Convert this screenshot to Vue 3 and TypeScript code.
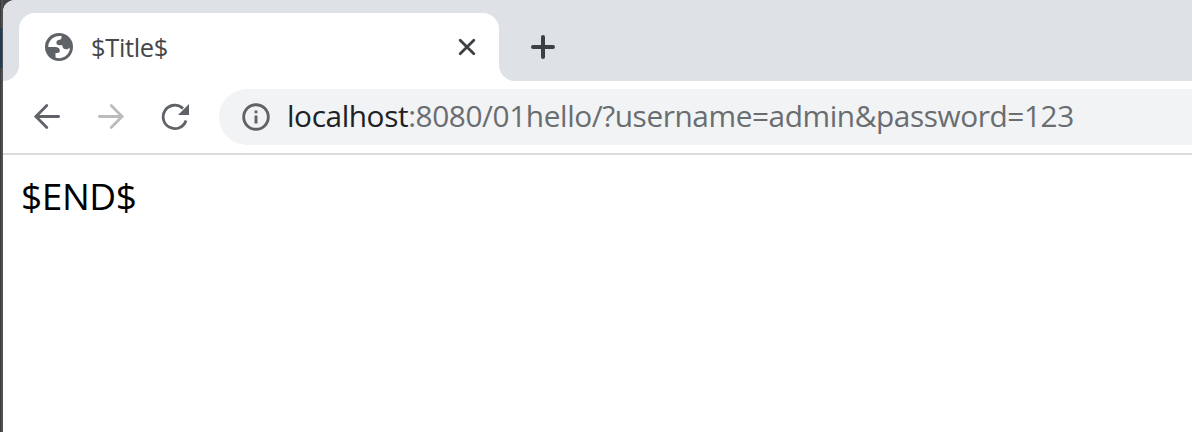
<script setup lang="ts">
const tabTitle: string = '$Title$'
const host: string = 'localhost'
const path: string = ':8080/01hello/?username=admin&password=123'
const content: string = '$END$'
</script>

<template>
  <div class="desktop">
    <div class="edge"><i class="edge-accent"></i></div>
    <main class="window">
      <header class="strip">
        <div class="gutter"></div>
        <div class="tab">
          <svg class="globe" viewBox="0 0 28 28">
            <circle cx="14" cy="14" r="14" fill="#5f6368" />
            <path d="M16.600 3.200C9.500 2.200 3.300 7 3.200 14H10C13.300 14 14.800 15.300 14.800 17.700C14.800 19.500 13.800 20.100 10.500 20.100V24.600C17.500 27 25 21.800 24.900 14.500C24 15.800 22.600 16.400 21 16.300C18.700 16.100 17.500 14.900 17.300 12.200H14.500C12.300 12.200 11.200 11.200 11.400 9.300C11.600 7.600 12.700 7 14.500 6.800C16 6.600 16.700 5.600 16.600 3.200Z" fill="#fff" />
          </svg>
          <span class="tab-title">{{ tabTitle }}</span>
          <svg class="close" viewBox="0 0 18 18"><path d="M2.200 2.200 15.800 15.800M15.800 2.200 2.200 15.800" /></svg>
        </div>
        <div class="rest">
          <svg class="plus" viewBox="0 0 24 24"><path d="M12 2V22M2 12H22" /></svg>
        </div>
      </header>
      <nav class="toolbar">
        <svg class="nav-icon back" viewBox="0 0 28 28"><path d="M25.600 13.500H3M13.800 2.600 2.900 13.500 13.800 24.400" /></svg>
        <svg class="nav-icon forward" viewBox="0 0 28 28"><path d="M2.400 13.500H25M14.200 2.600 25.100 13.500 14.200 24.400" /></svg>
        <svg class="reload" viewBox="0 0 28 28">
          <path d="M25 17.500A11.700 11.700 0 1 1 22 5.500" />
          <path class="head" d="M28 1V12H17Z" />
        </svg>
        <div class="omnibox">
          <svg class="info" viewBox="0 0 28 28">
            <circle cx="14" cy="14" r="12.300" />
            <path d="M14 12.500V20.500M14 7.500V10.300" />
          </svg>
          <div class="url"><span class="host">{{ host }}</span><span>{{ path }}</span></div>
        </div>
      </nav>
      <section class="page">{{ content }}</section>
    </main>
  </div>
</template>

<style>
body {
  background: #fff;
  overflow: hidden;
}
</style>

<style scoped>
.desktop {
  display: flex;
  width: 1192px;
  height: 432px;
  overflow: hidden;
  background: #454648;
  font-family: "Open Sans", "Noto Sans", sans-serif;
}
.edge {
  width: 3px;
  flex: none;
  padding-top: 28px;
  box-sizing: border-box;
  background: linear-gradient(90deg, #3b3c3e 0 1px, #505153 1px 3px);
}
.edge-accent {
  display: block;
  width: 2px;
  height: 40px;
  background: #203d56;
}
.window {
  flex: 1;
  min-width: 0;
  background: #fff;
  border-top-left-radius: 12px;
  overflow: hidden;
}
.strip {
  display: flex;
  height: 81px;
}
.gutter {
  width: 16px;
  background: #dee1e6;
  border-bottom-right-radius: 16px;
}
.tab {
  display: flex;
  align-items: center;
  width: 480px;
  box-sizing: border-box;
  padding: 0 23px 0 26px;
  border-top: 13px solid #dee1e6;
  position: relative;
  background: linear-gradient(#dee1e6, #dee1e6) 0 0 / 100% 16px no-repeat, #fff;
}
.tab::before {
  content: "";
  position: absolute;
  inset: 0;
  background: #fff;
  border-radius: 16px 16px 0 0;
}
.tab > * {
  position: relative;
}
.globe {
  width: 28px;
  height: 28px;
}
.tab-title {
  margin-left: 18px;
  font-size: 25.500px;
  line-height: 34px;
  letter-spacing: -0.35px;
  color: #45474a;
}
.close {
  width: 18px;
  height: 18px;
  margin-left: auto;
  fill: none;
  stroke: #3c4043;
  stroke-width: 2.8;
  stroke-linecap: round;
}
.rest {
  flex: 1;
  display: flex;
  padding: 35px 0 0 32px;
  background: #dee1e6;
  border-bottom-left-radius: 16px;
}
.plus {
  width: 24px;
  height: 24px;
  fill: none;
  stroke: #3c4043;
  stroke-width: 4;
  stroke-linecap: round;
}
.toolbar {
  display: flex;
  align-items: center;
  height: 74px;
  box-sizing: border-box;
  padding-left: 30px;
  border-bottom: 2px solid #dadbdc;
}
.nav-icon,
.reload {
  flex: none;
  width: 28px;
  height: 28px;
  fill: none;
  stroke: #5f6368;
  stroke-width: 2.8;
  stroke-linecap: round;
}
.forward {
  margin-left: 36px;
  stroke: #babcbe;
}
.reload {
  margin-left: 36px;
}
.reload path:first-child {
  stroke-linecap: butt;
}
.reload .head {
  fill: #5f6368;
  stroke: none;
}
.omnibox {
  display: flex;
  align-items: center;
  flex: 1;
  height: 56px;
  margin-left: 30px;
  padding-left: 22px;
  box-sizing: border-box;
  background: #f1f3f4;
  border-radius: 28px 0 0 28px;
}
.info {
  flex: none;
  width: 28px;
  height: 28px;
  margin-left: 0.5px;
  fill: none;
  stroke: #5f6368;
  stroke-width: 2.9;
}
.url {
  margin-left: 17.5px;
  padding-bottom: 2px;
  font-size: 29.800px;
  line-height: 40px;
  letter-spacing: -0.41px;
  white-space: nowrap;
  color: #6a6d70;
}
.host {
  color: #202124;
}
.page {
  padding: 15px 18px;
  font-size: 37px;
  line-height: 52px;
  letter-spacing: -0.4px;
  color: #000;
}
</style>
